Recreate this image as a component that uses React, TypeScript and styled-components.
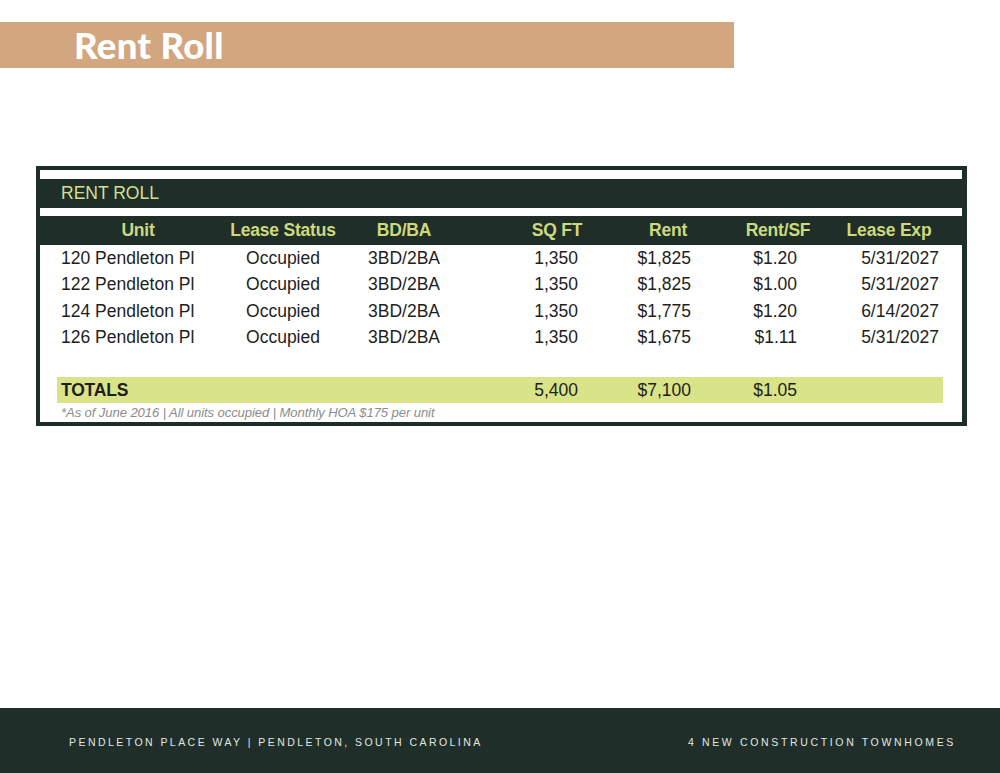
import React from "react";
import styled, { createGlobalStyle } from "styled-components";

const GlobalStyle = createGlobalStyle`
  html, body { margin: 0; padding: 0; background: #ffffff; }
  body { font-family: "Liberation Sans", Arial, sans-serif; }
  * { box-sizing: border-box; }
`;

const DARK = "#1f2e29";

const Page = styled.div`
  width: 1000px;
  height: 773px;
  display: flex;
  flex-direction: column;
  background: #ffffff;
  overflow: hidden;
`;

const TitleBand = styled.div`
  margin-top: 22px;
  width: 734px;
  height: 46px;
  background: #d2a67e;
  display: flex;
  align-items: center;
  padding-left: 74px;
`;

const Title = styled.h1`
  margin: 0;
  font-family: Lato, "Open Sans", sans-serif;
  font-weight: 900;
  font-size: 36.5px;
  line-height: 1;
  color: #ffffff;
  letter-spacing: 0.3px;
`;

const Main = styled.main`
  flex: 1;
  padding-top: 98px;
  padding-left: 36px;
`;

const Frame = styled.section`
  width: 931px;
  border: 4px solid ${DARK};
  border-right-width: 5px;
  background: #ffffff;
  font-family: "Liberation Sans", Arial, sans-serif;
`;

const Strip = styled.div<{ $h: number }>`
  height: ${(p) => p.$h}px;
  background: #ffffff;
`;

const Band = styled.div`
  height: 29px;
  background: ${DARK};
  display: flex;
  align-items: center;
  padding-left: 21px;
  color: #d5df8d;
  font-size: 17.5px;
`;

const COLS = "154px 136px 106px 147px 118px 110px 112px";

const GridRow = styled.div<{ $dark?: boolean; $h: number }>`
  display: grid;
  grid-template-columns: ${COLS};
  height: ${(p) => p.$h}px;
  align-items: center;
  padding-left: 21px;
  background: ${(p) => (p.$dark ? DARK : "transparent")};
`;

const Cell = styled.div<{ $align: string; $pl?: number; $pr?: number; $bold?: boolean; $color?: string }>`
  text-align: ${(p) => p.$align};
  padding-left: ${(p) => p.$pl ?? 0}px;
  padding-right: ${(p) => p.$pr ?? 0}px;
  font-size: 17.5px;
  font-weight: ${(p) => (p.$bold ? 700 : 400)};
  color: ${(p) => p.$color ?? "#1e1e1e"};
  white-space: nowrap;
  letter-spacing: ${(p) => (p.$bold ? "-0.2px" : "0")};
`;

const Body = styled.div`
  padding-top: 0;
`;

const TotalsBand = styled.div`
  margin: 26px 19px 0 17px;
  height: 26px;
  background: #d9e387;
  display: grid;
  grid-template-columns: ${COLS};
  align-items: center;
  padding-left: 4px;
`;

const Note = styled.p`
  margin: 0;
  height: 19px;
  padding-left: 21px;
  font-size: 13.1px;
  font-style: italic;
  color: #8c8c8c;
  line-height: 19px;
  letter-spacing: -0.1px;
`;

const Footer = styled.footer`
  height: 65px;
  background: ${DARK};
  display: flex;
  align-items: center;
  justify-content: space-between;
  padding: 2px 44px 0 69px;
`;

const FooterText = styled.span<{ $ls: number }>`
  font-family: "Liberation Sans", Arial, sans-serif;
  font-size: 10.5px;
  letter-spacing: ${(p) => p.$ls}px;
  color: #e2e6e2;
  text-transform: uppercase;
`;

type Col = {
  h: { align: string; pl?: number; pr?: number };
  b: { align: string; pl?: number; pr?: number };
};

const cols: Col[] = [
  { h: { align: "center" }, b: { align: "left" } },
  { h: { align: "center" }, b: { align: "center" } },
  { h: { align: "center" }, b: { align: "center" } },
  { h: { align: "center", pl: 53 }, b: { align: "right", pr: 26 } },
  { h: { align: "center", pl: 10 }, b: { align: "right", pr: 31 } },
  { h: { align: "center", pl: 2 }, b: { align: "right", pr: 35 } },
  { h: { align: "center", pl: 2 }, b: { align: "right", pr: 5 } },
];

const headers = ["Unit", "Lease Status", "BD/BA", "SQ FT", "Rent", "Rent/SF", "Lease Exp"];

const rows = [
  ["120 Pendleton Pl", "Occupied", "3BD/2BA", "1,350", "$1,825", "$1.20", "5/31/2027"],
  ["122 Pendleton Pl", "Occupied", "3BD/2BA", "1,350", "$1,825", "$1.00", "5/31/2027"],
  ["124 Pendleton Pl", "Occupied", "3BD/2BA", "1,350", "$1,775", "$1.20", "6/14/2027"],
  ["126 Pendleton Pl", "Occupied", "3BD/2BA", "1,350", "$1,675", "$1.11", "5/31/2027"],
];

const totals = ["TOTALS", "", "", "5,400", "$7,100", "$1.05", ""];

export default function App() {
  return (
    <>
      <GlobalStyle />
      <Page>
        <TitleBand>
          <Title>Rent Roll</Title>
        </TitleBand>
        <Main>
          <Frame>
            <Strip $h={9} />
            <Band>RENT ROLL</Band>
            <Strip $h={8} />
            <GridRow $dark $h={29}>
              {headers.map((h, i) => (
                <Cell key={h} $align={cols[i].h.align} $pl={cols[i].h.pl} $pr={cols[i].h.pr} $bold $color="#cdd97b">
                  {h}
                </Cell>
              ))}
            </GridRow>
            <Body>
              {rows.map((r, ri) => (
                <GridRow key={ri} $h={26.5}>
                  {r.map((v, i) => (
                    <Cell key={i} $align={cols[i].b.align} $pl={cols[i].b.pl} $pr={cols[i].b.pr}>
                      {v}
                    </Cell>
                  ))}
                </GridRow>
              ))}
            </Body>
            <TotalsBand>
              {totals.map((v, i) => (
                <Cell key={i} $align={cols[i].b.align} $pl={cols[i].b.pl} $pr={cols[i].b.pr} $bold={i === 0}>
                  {v}
                </Cell>
              ))}
            </TotalsBand>
            <Note>*As of June 2016 | All units occupied | Monthly HOA $175 per unit</Note>
          </Frame>
        </Main>
        <Footer>
          <FooterText $ls={2.45}>Pendleton Place Way | Pendleton, South Carolina</FooterText>
          <FooterText $ls={2.65}>4 New Construction Townhomes</FooterText>
        </Footer>
      </Page>
    </>
  );
}
